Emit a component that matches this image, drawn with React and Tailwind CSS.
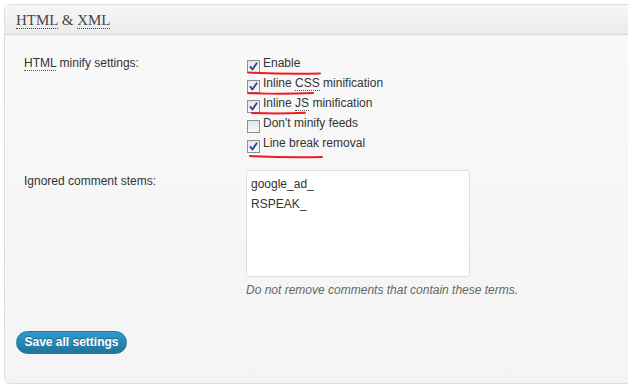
import React from "react";

function Box({ checked }) {
  return (
    <svg width="13" height="13" viewBox="0 0 13 13" className="shrink-0">
      <defs>
        <linearGradient id="cbg" x1="0" y1="0" x2="0" y2="1">
          <stop offset="0" stopColor="#e4e4e4" />
          <stop offset="1" stopColor="#fbfbfb" />
        </linearGradient>
      </defs>
      <rect x="0.5" y="0.5" width="12" height="12" fill="url(#cbg)" stroke="#8f8f8f" />
      {checked && (
        <path d="M3 6.2 L5.4 9.6 L10 2.8" fill="none" stroke="#2b3f93" strokeWidth="1.8" strokeLinejoin="round" />
      )}
    </svg>
  );
}

function Abbr({ children }) {
  return <span className="border-b border-dotted border-[#555] leading-[13px]">{children}</span>;
}

function Row({ checked, children }) {
  return (
    <div className="flex h-[20px] items-start">
      <div className="mt-[7px] ml-[1px]">
        <Box checked={checked} />
      </div>
      <div className="ml-[3px] mt-[1px] leading-[18px]">{children}</div>
    </div>
  );
}

export default function App() {
  return (
    <div className="relative w-[628px] h-[387px] overflow-hidden bg-white pt-[4px] pl-[4px] font-['Liberation_Sans',Arial,sans-serif] text-[12px] text-[#333]">
      <div className="w-[640px] h-[380px] border border-[#dfdfdf] rounded-[6px] overflow-hidden bg-gradient-to-b from-[#f9f9f9] to-[#f4f4f4]">
        <div className="h-[30px] flex items-center pl-[11px] bg-gradient-to-b from-[#f6f6f6] to-[#ebebeb] border-b border-[#dadada] font-['Liberation_Serif',Georgia,serif] text-[15px] text-[#464646]">
          <span className="mt-[1px]">
            <span className="border-b border-dotted border-[#464646]">HTML</span> &amp;{" "}
            <span className="border-b border-dotted border-[#464646]">XML</span>
          </span>
        </div>

        <div className="pl-[19px] pt-[18px]">
          <div className="flex">
            <div className="w-[222px] leading-[20px]">
              <Abbr>HTML</Abbr> minify settings:
            </div>
            <div>
              <Row checked>Enable</Row>
              <Row checked>
                Inline <Abbr>CSS</Abbr> minification
              </Row>
              <Row checked>
                Inline <Abbr>JS</Abbr> minification
              </Row>
              <Row checked={false}>Don't minify feeds</Row>
              <Row checked>Line break removal</Row>
            </div>
          </div>

          <div className="flex mt-[17px]">
            <div className="w-[222px] leading-[20px] mt-[1px]">Ignored comment stems:</div>
            <div>
              <textarea
                readOnly
                defaultValue={"google_ad_\nRSPEAK_"}
                className="block w-[224px] h-[107px] resize-none bg-white border border-[#dfdfdf] rounded-[3px] px-[4px] pt-[3px] leading-[20px] text-[12px] text-[#333] outline-none font-['Liberation_Sans',Arial,sans-serif]"
              />
              <div className="mt-[5px] leading-[16px] italic text-[#666]">
                Do not remove comments that contain these terms.
              </div>
            </div>
          </div>
        </div>

        <div className="pl-[11px] mt-[33px]">
          <button className="w-[111px] h-[23px] rounded-full border border-[#21759b] bg-gradient-to-b from-[#2e9bcc] to-[#21759b] text-white font-bold text-[12px] leading-[21px] [text-shadow:0_-1px_0_rgba(0,0,0,0.3)]">
            Save all settings
          </button>
        </div>
      </div>

      <svg className="absolute left-0 top-0 pointer-events-none" width="628" height="387">
        <g fill="none" stroke="#ee1c25" strokeWidth="2" strokeLinecap="round">
          <path d="M248 72.5 Q285 74.5 320 73.5" />
          <path d="M248 93 Q280 94.5 313 93" />
          <path d="M252 113 Q278 114.2 305 112.8" />
          <path d="M250 156 Q286 158 322 157" />
        </g>
      </svg>
    </div>
  );
}
